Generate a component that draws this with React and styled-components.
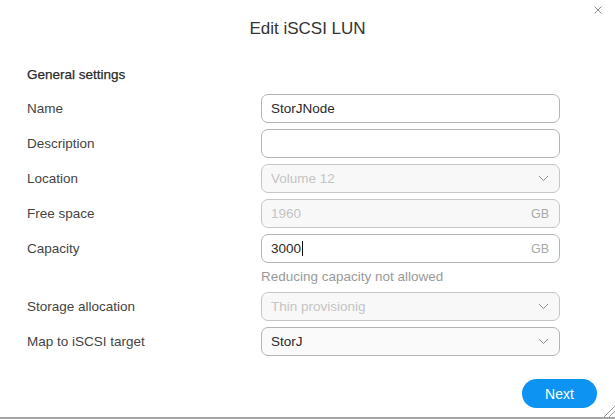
import styled, { createGlobalStyle } from "styled-components";

const GlobalStyle = createGlobalStyle`
  html, body {
    margin: 0;
    padding: 0;
    background: #ffffff;
  }
  body {
    font-family: "Liberation Sans", Arial, sans-serif;
    color: #333333;
  }
`;

const Chevron = () => (
  <svg width="11" height="7" viewBox="0 0 11 7" fill="none">
    <path d="M1 1L5.5 5.5L10 1" stroke="#8f8f8f" strokeWidth="1" />
  </svg>
);

const rows = [
  { label: "Name", kind: "text", value: "StorJNode" },
  { label: "Description", kind: "text", value: "" },
  { label: "Location", kind: "select", value: "Volume 12", disabled: true },
  { label: "Free space", kind: "text", value: "1960", unit: "GB", disabled: true },
  {
    label: "Capacity",
    kind: "text",
    value: "3000",
    unit: "GB",
    caret: true,
    hint: "Reducing capacity not allowed",
  },
  { label: "Storage allocation", kind: "select", value: "Thin provisionig", disabled: true },
  { label: "Map to iSCSI target", kind: "select", value: "StorJ", filled: true },
];

const App = () => {
  return (
    <>
      <GlobalStyle />
      <Dialog>
        <CloseButton>
          <svg width="8" height="8" viewBox="0 0 8 8">
            <path d="M0.5 0.5L7.5 7.5M7.5 0.5L0.5 7.5" stroke="#8c8c8c" strokeWidth="1" />
          </svg>
        </CloseButton>
        <Title>Edit iSCSI LUN</Title>
        <Body>
          <SectionTitle>General settings</SectionTitle>
          <Form>
            {rows.map((row) => (
              <Row key={row.label}>
                <Label>{row.label}</Label>
                <FieldColumn>
                  <Field $disabled={row.disabled} $filled={row.filled}>
                    <Value $disabled={row.disabled}>
                      {row.value}
                      {row.caret && <Caret />}
                    </Value>
                    {row.unit && <Unit>{row.unit}</Unit>}
                    {row.kind === "select" && <Chevron />}
                  </Field>
                  {row.hint && <Hint>{row.hint}</Hint>}
                </FieldColumn>
              </Row>
            ))}
          </Form>
        </Body>
        <Footer>
          <NextButton>Next</NextButton>
        </Footer>
        <Grip>
          <svg width="14" height="12" viewBox="0 0 14 12">
            <path d="M3 12L14 1M8 12L14 6" stroke="#9a9a9a" strokeWidth="1" />
          </svg>
        </Grip>
      </Dialog>
    </>
  );
};

const Dialog = styled.div`
  position: relative;
  width: 615px;
  height: 419px;
  box-sizing: border-box;
  border-bottom: 2px solid #a4a4a4;
  background: #ffffff;
  display: flex;
  flex-direction: column;
`;

const CloseButton = styled.div`
  position: absolute;
  top: 6px;
  right: 13px;
  line-height: 0;
`;

const Title = styled.h1`
  margin: 19px 0 0;
  text-align: center;
  font-size: 17px;
  font-weight: 400;
  line-height: 20px;
  color: #333333;
`;

const Body = styled.div`
  padding: 28px 54px 0 27px;
`;

const SectionTitle = styled.div`
  font-size: 13.5px;
  font-weight: 400;
  color: #2a2a2a;
  line-height: 16px;
  -webkit-text-stroke: 0.25px #2a2a2a;
`;

const Form = styled.div`
  margin-top: 11px;
  display: flex;
  flex-direction: column;
  gap: 6px;
`;

const Row = styled.div`
  display: grid;
  grid-template-columns: 234px 299px;
  align-items: start;
`;

const Label = styled.div`
  font-size: 13.5px;
  line-height: 29px;
  color: #444444;
`;

const FieldColumn = styled.div`
  display: flex;
  flex-direction: column;
`;

const Field = styled.div`
  height: 29px;
  box-sizing: border-box;
  border: 1px solid ${({ $disabled }) => ($disabled ? "#c6c6c6" : "#b4b4b4")};
  border-radius: 7px;
  background: ${({ $disabled, $filled }) =>
    $disabled ? "#f8f8f8" : $filled ? "#fafafa" : "#ffffff"};
  display: flex;
  align-items: center;
  padding: 0 10px 0 9px;
  gap: 8px;
`;

const Value = styled.div`
  flex: 1;
  font-size: 13.5px;
  color: ${({ $disabled }) => ($disabled ? "#c4c4c4" : "#2a2a2a")};
  display: flex;
  align-items: center;
`;

const Caret = styled.span`
  display: inline-block;
  width: 1px;
  height: 15px;
  background: #111111;
  margin-left: 1px;
`;

const Unit = styled.span`
  font-size: 12.5px;
  color: #a8a8a8;
`;

const Hint = styled.div`
  font-size: 13.5px;
  color: #9a9a9a;
  margin-top: 6px;
  line-height: 15px;
  margin-bottom: 2px;
`;

const Footer = styled.div`
  margin-top: auto;
  padding: 0 18px 9px 0;
  display: flex;
  justify-content: flex-end;
`;

const NextButton = styled.button`
  width: 75px;
  height: 29px;
  border: none;
  border-radius: 15px;
  background: #0d94f2;
  color: #ffffff;
  font-family: "Liberation Sans", Arial, sans-serif;
  font-size: 14px;
  cursor: pointer;
`;

const Grip = styled.div`
  position: absolute;
  right: 0;
  bottom: 0;
  line-height: 0;
`;

export default App;
